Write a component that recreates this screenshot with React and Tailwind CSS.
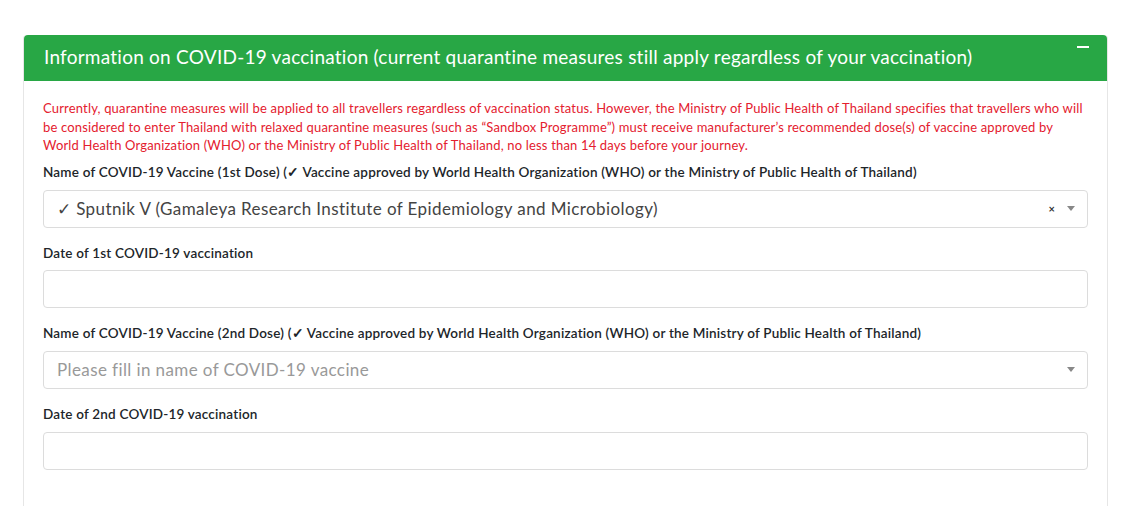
export default function App() {
  const font = { fontFamily: '"Lato", "Noto Sans", sans-serif' };
  return (
    <div className="min-h-screen bg-white pt-[35px] px-[23px]" style={font}>
      <div className="w-[1085px] rounded-t-[4px] border-x border-[#e6e6e6] bg-white">
        <div className="flex h-[46px] items-start justify-between rounded-t-[4px] bg-[#28a745] pl-[20px] pr-[18px]">
          <h2 className="pt-[10px] text-[19px] leading-[24px] tracking-[0.24px] text-white">
            Information on COVID-19 vaccination (current quarantine measures still apply regardless of your vaccination)
          </h2>
          <span className="mt-[11px] block h-[2px] w-[12px] bg-white" />
        </div>
        <div className="px-[19px] pt-[18px] pb-[36px]">
          <p className="text-[13px] leading-[18.5px] tracking-[0.17px] text-[#e4202e]">
            <span className="block whitespace-nowrap">Currently, quarantine measures will be applied to all travellers regardless of vaccination status. However, the Ministry of Public Health of Thailand specifies that travellers who will</span>
            <span className="block whitespace-nowrap">be considered to enter Thailand with relaxed quarantine measures (such as “Sandbox Programme”) must receive manufacturer’s recommended dose(s) of vaccine approved by</span>
            <span className="block whitespace-nowrap">World Health Organization (WHO) or the Ministry of Public Health of Thailand, no less than 14 days before your journey.</span>
          </p>
          <label className="mt-[7px] block text-[13.5px] font-semibold leading-[20px] tracking-[0.2px] text-[#212529]">
            Name of COVID-19 Vaccine (1st Dose) (✓ Vaccine approved by World Health Organization (WHO) or the Ministry of Public Health of Thailand)
          </label>
          <div className="mt-[8px] flex h-[38px] items-center rounded-[4px] border border-[#dcdcdc] pl-[13px] pr-[12px]">
            <span className="flex-1 text-[17px] tracking-[0.4px] text-[#444]">✓ Sputnik V (Gamaleya Research Institute of Epidemiology and Microbiology)</span>
            <span className="mr-[12px] text-[11px] font-bold leading-none text-[#333]">×</span>
            <span className="h-0 w-0 border-x-[4px] border-t-[5px] border-x-transparent border-t-[#888]" />
          </div>
          <label className="mt-[15px] block text-[13.5px] font-semibold leading-[20px] tracking-[0.2px] text-[#212529]">
            Date of 1st COVID-19 vaccination
          </label>
          <div className="mt-[7px] h-[38px] rounded-[4px] border border-[#dcdcdc]" />
          <label className="mt-[15px] block text-[13.5px] font-semibold leading-[20px] tracking-[0.2px] text-[#212529]">
            Name of COVID-19 Vaccine (2nd Dose) (✓ Vaccine approved by World Health Organization (WHO) or the Ministry of Public Health of Thailand)
          </label>
          <div className="mt-[8px] flex h-[38px] items-center rounded-[4px] border border-[#dcdcdc] pl-[13px] pr-[12px]">
            <span className="flex-1 text-[17px] tracking-[0.4px] text-[#999]">Please fill in name of COVID-19 vaccine</span>
            <span className="h-0 w-0 border-x-[4px] border-t-[5px] border-x-transparent border-t-[#888]" />
          </div>
          <label className="mt-[15px] block text-[13.5px] font-semibold leading-[20px] tracking-[0.2px] text-[#212529]">
            Date of 2nd COVID-19 vaccination
          </label>
          <div className="mt-[8px] h-[38px] rounded-[4px] border border-[#dcdcdc]" />
        </div>
      </div>
    </div>
  );
}
